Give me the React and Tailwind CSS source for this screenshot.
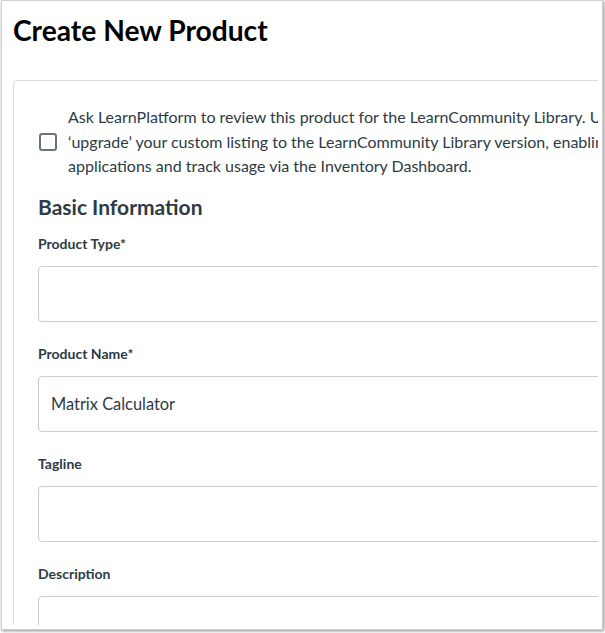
export default function App() {
  const fields = [
    { label: "Product Type*", value: "" },
    { label: "Product Name*", value: "Matrix Calculator" },
    { label: "Tagline", value: "" },
    { label: "Description", value: "" },
  ];
  return (
    <div className="w-[605px] h-[633px] bg-white" style={{ fontFamily: "Lato, 'Open Sans', sans-serif" }}>
      <div className="ml-px w-[602px] h-[630px] border border-[#cfcfcf] bg-white shadow-[1px_1px_3px_rgba(0,0,0,0.45)] overflow-hidden">
        <div className="w-[596px] h-[624px] overflow-hidden">
          <h1 className="pt-[12px] pl-[11px] text-[28.2px] leading-[34px] font-bold text-black whitespace-nowrap">
            Create New Product
          </h1>
          <div className="mt-[33px] ml-[11px] w-[720px] rounded-[4px] border border-[#dcdcdc] pt-[24px] pl-[24px] text-[#2d3b45]">
            <div className="flex items-center">
              <div className="ml-px h-[18px] w-[18px] shrink-0 rounded-[3px] border-2 border-[#68757d] bg-white" />
              <p className="ml-[11px] text-[16px] leading-[24.5px] whitespace-nowrap">
                Ask LearnPlatform to review this product for the LearnCommunity Library. Upon approval, we will
                <br />
                ‘upgrade’ your custom listing to the LearnCommunity Library version, enabling you to add
                <br />
                applications and track usage via the Inventory Dashboard.
              </p>
            </div>
            <h2 className="mt-[14px] text-[21px] leading-[28px] font-bold">Basic Information</h2>
            <div className="mt-[12px]">
              {fields.map((f) => (
                <div key={f.label} className="mb-[21px]">
                  <div className="text-[14px] leading-[21px] font-bold">{f.label}</div>
                  <div className="mt-[12px] h-[56px] w-[680px] rounded-[4px] border border-[#c7cdd1] bg-white px-3 flex items-center text-[16.4px] leading-[24px]">
                    {f.value}
                  </div>
                </div>
              ))}
            </div>
          </div>
        </div>
      </div>
    </div>
  );
}
